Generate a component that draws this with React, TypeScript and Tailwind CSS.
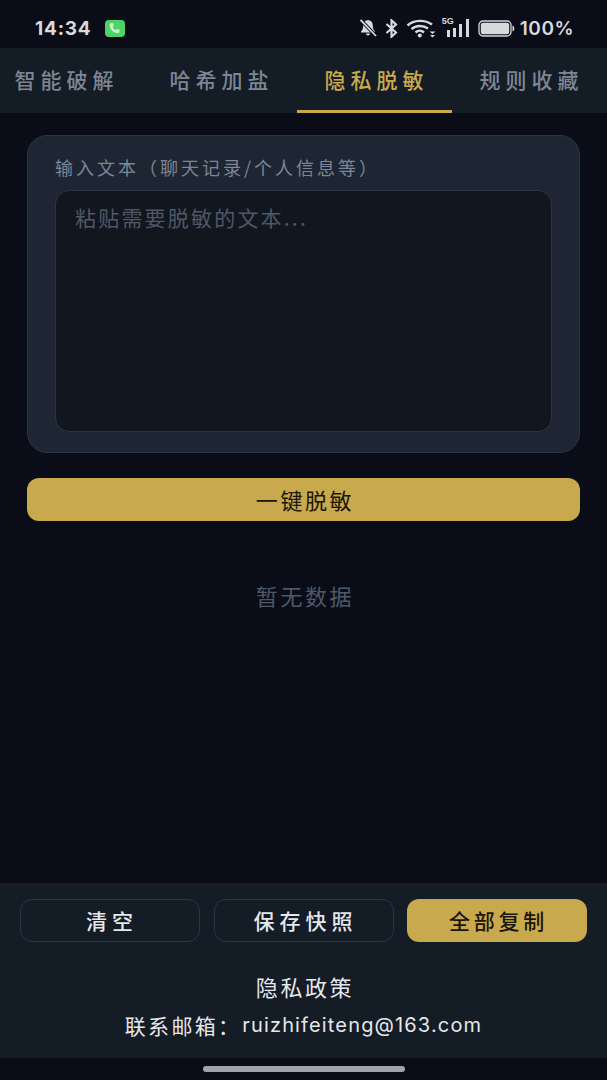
import React from "react";

const cjk = "font-['Noto_Sans_CJK_SC','Noto_Sans',sans-serif]";

function Bell() {
  return (
    <svg width="20" height="20" viewBox="0 0 20 20" fill="#d8d9dc">
      <path d="M10 2.200c-3 0-4.800 2.200-4.800 5.200 0 3.200-.9 4.600-2.200 6v1h14v-1c-1.300-1.400-2.200-2.800-2.200-6 0-3-1.800-5.200-4.800-5.200z" />
      <path d="M8 15.500h4c0 1.200-.9 2-2 2s-2-.8-2-2z" />
      <path d="M2.500 1.800 18 18" stroke="#0a0d17" strokeWidth="3.400" />
      <path d="M2.500 1.800 18 18" stroke="#d8d9dc" strokeWidth="1.800" />
    </svg>
  );
}

function Bluetooth() {
  return (
    <svg width="14" height="19" viewBox="0 0 14 19" fill="none" stroke="#d8d9dc" strokeWidth="2.200">
      <path d="M1.500 5 11 13.500 6.500 17.700V1.300L11 5.500 1.500 14" />
    </svg>
  );
}

function Wifi() {
  return (
    <svg width="30" height="20" viewBox="0 0 30 20" fill="none" stroke="#d8d9dc" strokeWidth="2.400">
      <path d="M1.500 7.500C8 1.500 19 1.500 26 6.500" />
      <path d="M5.500 11C10 7 17 7 22 10.500" />
      <path d="M9.500 14.500c2.500-2.300 6-2.300 8.500 0" />
      <circle cx="13.800" cy="17.500" r="2" fill="#d8d9dc" stroke="none" />
      <path d="M23.500 13.500h6l-3 2.500z M24 17h5l-2.500 2.500z" fill="#d8d9dc" stroke="none" />
    </svg>
  );
}

function Signal() {
  return (
    <svg width="28" height="20" viewBox="0 0 28 20" fill="#d8d9dc">
      <rect x="5" y="12" width="3" height="7" />
      <rect x="11" y="10" width="3" height="9" />
      <rect x="17" y="6" width="3" height="13" />
      <rect x="24" y="1" width="3" height="18" />
    </svg>
  );
}

function Battery() {
  return (
    <svg width="37" height="17" viewBox="0 0 37 17" fill="none">
      <rect x="1" y="1" width="32" height="15" rx="4" stroke="#d8d9dc" strokeWidth="1.300" />
      <rect x="2.800" y="2.800" width="28.400" height="11.400" rx="2.500" fill="#d8d9dc" />
      <path d="M34.500 5.500c1.300.4 1.800 1.500 1.800 3s-.5 2.600-1.800 3z" fill="#d8d9dc" />
    </svg>
  );
}

function Phone() {
  return (
    <div className="flex h-[17px] w-[20px] items-center justify-center rounded-[4px] bg-[#4bd365]">
      <svg width="13" height="13" viewBox="0 0 24 24" fill="#c9f5d2">
        <path d="M5 2.500 9 2l2 5-2.500 2c1 2.500 3.500 5 6 6l2-2.500 5 2-.5 4c-.2 1-1 2-2 2C10 20.500 3.500 14 3 5c0-1.200 1-2.300 2-2.500z" />
      </svg>
    </div>
  );
}

const tabs = ["智能破解", "哈希加盐", "隐私脱敏", "规则收藏"];

export default function App() {
  return (
    <div className={`flex h-[1080px] w-[607px] flex-col overflow-hidden bg-[#0a0d17] ${cjk}`}>
      <div className="flex h-[48px] shrink-0 items-center justify-between pl-[35px] pr-[33px] pt-[8px]">
        <div className="flex items-center gap-[13px]">
          <span className="font-['Inter',sans-serif] text-[19px] font-bold leading-none tracking-[0.800px] text-[#d8d9dc]">14:34</span>
          <Phone />
        </div>
        <div className="flex items-center">
          <Bell />
          <div className="ml-[7px]"><Bluetooth /></div>
          <div className="ml-[7px]"><Wifi /></div>
          <div className="relative ml-[6px]">
            <span className="absolute left-0 top-[-1px] font-['Liberation_Sans',sans-serif] text-[9px] font-bold leading-none text-[#d8d9dc]">5G</span>
            <Signal />
          </div>
          <div className="ml-[8px]"><Battery /></div>
          <span className="ml-[5px] font-['Inter',sans-serif] text-[19px] font-semibold leading-none tracking-[0.500px] text-[#d8d9dc]">100%</span>
        </div>
      </div>

      <div className="flex h-[65px] shrink-0 overflow-hidden bg-[#141c26]">
        <div className="-ml-[13px] flex shrink-0">
          {tabs.map((t, i) => (
            <div
              key={t}
              className={
                i === 2
                  ? "flex h-[65px] w-[155px] shrink-0 items-center justify-center border-b-[3px] border-[#c9a94d] pl-[4px] pt-[2px] text-[21px] font-medium tracking-[5px] text-[#c9a94d]"
                  : "flex h-[65px] w-[155px] shrink-0 items-center justify-center border-b-[3px] border-transparent pl-[4px] pt-[2px] text-[21px] font-medium tracking-[5px] text-[#7d8695]"
              }
            >
              {t}
            </div>
          ))}
        </div>
      </div>

      <div className="flex flex-1 flex-col items-center px-[27px] pt-[22px]">
        <div className="flex h-[318px] w-full flex-col rounded-[20px] border border-[#2b3446] bg-[#1e2533] px-[27px] pt-[19px]">
          <div className="text-[18px] leading-[24px] tracking-[3px] text-[#7d8695]">输入文本（聊天记录/个人信息等）</div>
          <div className="mt-[11px] h-[242px] rounded-[14px] border border-[#2b3446] bg-[#12161f] px-[19px] pt-[10px] text-[21px] leading-[32px] tracking-[2.200px] text-[#4f5868]">
            粘贴需要脱敏的文本...
          </div>
        </div>
        <button className="mt-[25px] flex h-[43px] w-full shrink-0 items-center justify-center rounded-[12px] bg-[#c9a94d] pb-[1px] pl-[3px] text-[22px] tracking-[2.600px] text-[#1a1508]">
          一键脱敏
        </button>
        <div className="mt-[58px] pl-[3px] text-[22px] leading-[32px] tracking-[2.600px] text-[#4f5868]">暂无数据</div>
      </div>

      <div className="flex h-[175px] shrink-0 flex-col items-center bg-[#141c26] px-[20px] pt-[16px]">
        <div className="flex w-full justify-between">
          <button className="flex h-[43px] w-[180px] items-center justify-center rounded-[12px] border border-[#2b3446] pl-[4px] text-[21px] font-medium tracking-[5px] text-[#e6e7ea]">清空</button>
          <button className="flex h-[43px] w-[180px] items-center justify-center rounded-[12px] border border-[#2b3446] pl-[4px] text-[21px] font-medium tracking-[5px] text-[#e6e7ea]">保存快照</button>
          <button className="flex h-[43px] w-[180px] items-center justify-center rounded-[12px] bg-[#c9a94d] pl-[3px] text-[21px] font-medium tracking-[3.800px] text-[#1a1508]">全部复制</button>
        </div>
        <div className="mt-[28px] pl-[3px] text-[22px] leading-[32px] tracking-[2.600px] text-[#e6e7ea]">隐私政策</div>
        <div className="mt-[7px] flex items-center text-[21px] leading-[32px] text-[#e6e7ea]">
          <span className="tracking-[2.300px]">联系邮箱：</span>
          <span className="ml-[1px] font-['Inter',sans-serif] text-[20px] tracking-[1.150px]">ruizhifeiteng@163.com</span>
        </div>
      </div>

      <div className="flex h-[22px] shrink-0 justify-center pt-[8px]">
        <div className="h-[6px] w-[202px] rounded-full bg-[#a0a3ad]" />
      </div>
    </div>
  );
}
